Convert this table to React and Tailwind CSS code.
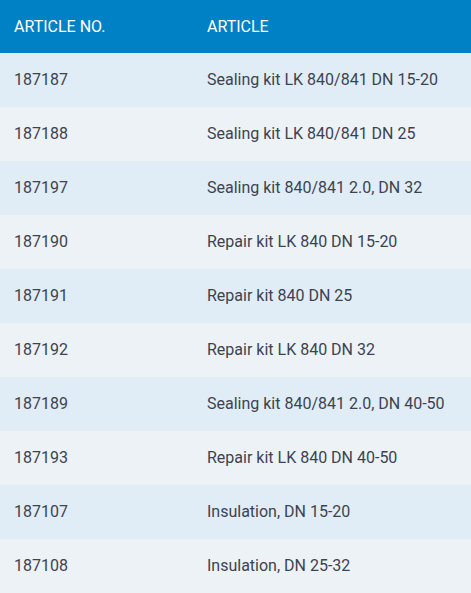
const rows = [
  ["187187", "Sealing kit LK 840/841 DN 15-20"],
  ["187188", "Sealing kit LK 840/841 DN 25"],
  ["187197", "Sealing kit 840/841 2.0, DN 32"],
  ["187190", "Repair kit LK 840 DN 15-20"],
  ["187191", "Repair kit 840 DN 25"],
  ["187192", "Repair kit LK 840 DN 32"],
  ["187189", "Sealing kit 840/841 2.0, DN 40-50"],
  ["187193", "Repair kit LK 840 DN 40-50"],
  ["187107", "Insulation, DN 15-20"],
  ["187108", "Insulation, DN 25-32"],
]

const App = () => {
  return (
    <div className="w-[471px] font-['Roboto',sans-serif] text-[16px]">
      <div className="flex items-center h-[53px] bg-[#0080c5] text-white uppercase">
        <div className="w-[207px] pl-[14px]">Article No.</div>
        <div>Article</div>
      </div>
      {rows.map(([no, name], i) => (
        <div
          key={no}
          className={`flex items-center h-[54px] text-[#3c4350] ${i % 2 === 0 ? "bg-[#e1edf6]" : "bg-[#edf2f7]"}`}
        >
          <div className="w-[207px] pl-[14px]">{no}</div>
          <div>{name}</div>
        </div>
      ))}
    </div>
  )
}

export default App
